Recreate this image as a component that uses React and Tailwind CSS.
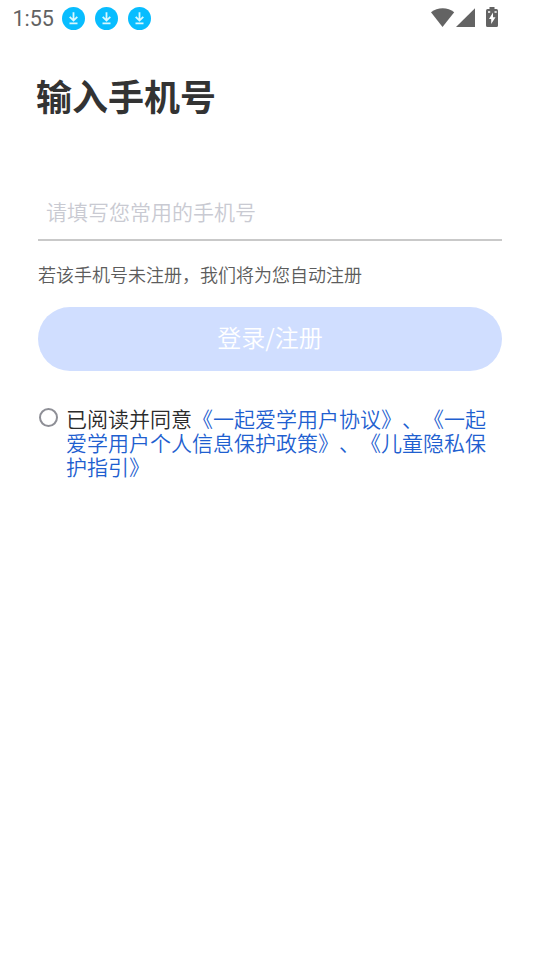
import React, { useState } from "react";

const DownloadBadge = () => (
  <svg width="24" height="24" viewBox="0 0 24 24" fill="none">
    <circle cx="11.500" cy="11.500" r="11.500" fill="#08bdff" />
    <path
      d="M11.500 5.200v8M7.700 9.800l3.800 3.800 3.800-3.800M7.500 16.300h8"
      stroke="#d9f8fe"
      strokeWidth="1.8"
    />
  </svg>
);

const StatusBar = () => (
  <div className="flex h-9 items-center justify-between pt-px pr-10 pl-[12.5px]">
    <div className="flex items-center">
      <span className="w-[49.5px] font-['Roboto',sans-serif] text-[21.5px] leading-6 font-normal text-[#626262]">
        1:55
      </span>
      <div className="flex gap-[9px]">
        <DownloadBadge />
        <DownloadBadge />
        <DownloadBadge />
      </div>
    </div>

    <svg width="70" height="24" viewBox="0 0 70 24" fill="#636363">
      <path d="M1 5.300C7.500 0 17.900 0 24.200 5.300L12.500 20Z" />
      <path d="M45 1.200V20H26Z" />
      <path
        fillRule="evenodd"
        d="M57.500 2H59.500V0H64.500V2H66.500Q68 2 68 3.800V18.500Q68 20 66.500 20H57.500Q56 20 56 18.500V3.800Q56 2 57.500 2ZM63 5.500L59 12H61.200V17L65.500 10.300H63Z"
      />
      <path d="M58 4.200h2.200v1.600H58zM64.500 4.200h2.200v1.600h-2.200z" fill="#fff" />
    </svg>
  </div>
);

const App = () => {
  const [phone, setPhone] = useState("");
  const [agreed, setAgreed] = useState(false);

  return (
    <div className="flex min-h-screen w-full flex-col bg-white font-['Noto_Sans_CJK_SC',sans-serif] font-[350]">
      <StatusBar />

      <main className="flex flex-col px-[38px]">
        <h1 className="mt-[33px] -ml-0.5 text-[36px] leading-[52px] font-bold text-[#333]">
          输入手机号
        </h1>

        <input
          type="tel"
          value={phone}
          onChange={(e) => setPhone(e.target.value)}
          placeholder="请填写您常用的手机号"
          className="mt-[63px] h-[57px] border-b-2 border-[#c9c9c9] px-2 pb-0.5 text-[21px] text-[#333] outline-none placeholder:text-[#c9cad2]"
        />

        <p className="mt-5 text-[18px] leading-[26px] text-[#5c5c5c]">
          若该手机号未注册，我们将为您自动注册
        </p>

        <button className="mt-5 h-16 rounded-full bg-[#d0deff] pb-1 text-[24px] text-white">
          登录/注册
        </button>

        <div className="mt-[35px] flex">
          <button
            aria-label="同意协议"
            onClick={() => setAgreed(!agreed)}
            className={`mt-0.5 ml-px size-[19px] shrink-0 rounded-full border-2 border-[#8e8f96] ${
              agreed ? "bg-[#1f5fd0]" : "bg-white"
            }`}
          />
          <p className="ml-2 w-[422px] text-[21px] leading-6 text-[#2b2b2b] [text-spacing-trim:space-all]">
            已阅读并同意
            <span className="text-[#1f5fd0]">
              《一起爱学用户协议》、《一起爱学用户个人信息保护政策》、《儿童隐私保护指引》
            </span>
          </p>
        </div>
      </main>
    </div>
  );
};

export default App;
